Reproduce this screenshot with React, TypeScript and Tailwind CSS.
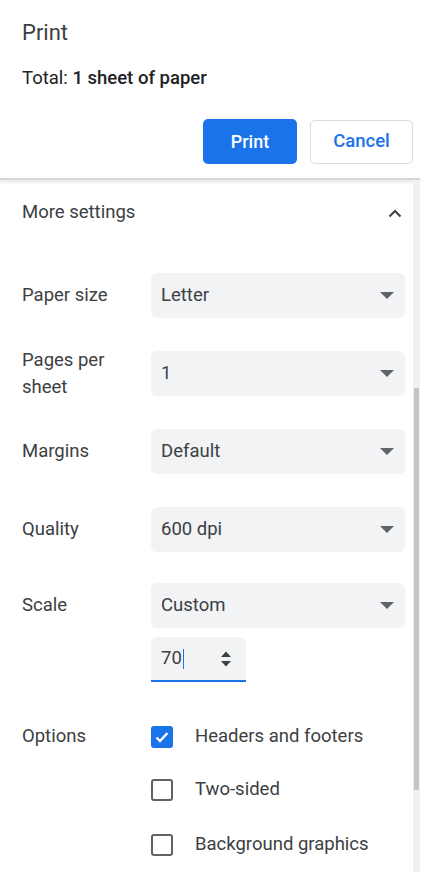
import React from "react";

function Caret() {
  return (
    <svg width="14" height="7" viewBox="0 0 14 7" className="shrink-0">
      <path d="M0 0h14L7 7z" fill="#5f6368" />
    </svg>
  );
}

function Select({ value }: { value: string }) {
  return (
    <div className="flex-1 h-[45px] rounded-[6px] bg-[#f1f3f4] flex items-center justify-between pl-[10px] pr-[11px] text-[18.5px] text-[#3c4043]">
      <span>{value}</span>
      <Caret />
    </div>
  );
}

function Row({ label, value, className }: { label: React.ReactNode; value: string; className?: string }) {
  return (
    <div className={"flex items-center h-[45px] " + (className ?? "")}>
      <div className="w-[129px] shrink-0 text-[18.5px] leading-[27px] text-[#3c4043]">{label}</div>
      <Select value={value} />
    </div>
  );
}

function Checkbox({ checked, label, className }: { checked?: boolean; label: string; className?: string }) {
  return (
    <div className={"flex items-center h-[27px] " + (className ?? "")}>
      {checked ? (
        <div className="w-[22px] h-[22px] rounded-[3px] bg-[#1a73e8] flex items-center justify-center">
          <svg width="16" height="16" viewBox="0 0 16 16">
            <path d="M2.5 8.5l3.5 3.5 7.5-8" fill="none" stroke="#fff" strokeWidth="2.4" />
          </svg>
        </div>
      ) : (
        <div className="w-[22px] h-[22px] rounded-[3px] border-2 border-[#5f6368]" />
      )}
      <span className="ml-[22px] text-[18.5px] text-[#3c4043]">{label}</span>
    </div>
  );
}

export default function App() {
  return (
    <div className="w-[434px] h-[882px] bg-white overflow-hidden" style={{ fontFamily: "Roboto, 'Liberation Sans', sans-serif" }}>
      <div className="w-[420px]">
        <div className="px-[22px] pt-[19px]">
          <div className="text-[22px] leading-[28px] text-[#3c4043]">Print</div>
          <div className="mt-[18px] text-[18.5px] leading-[26px] text-[#202124]">
            Total: <span className="font-medium">1 sheet of paper</span>
          </div>
        </div>
        <div className="flex items-center justify-end gap-[13px] pr-[7px] mt-[28px]">
          <button className="w-[94px] h-[45px] rounded-[5px] bg-[#1a73e8] text-white text-[18px] font-medium">Print</button>
          <button className="w-[103px] h-[44px] rounded-[5px] border border-[#dadce0] text-[#1a73e8] text-[18.5px] font-medium">Cancel</button>
        </div>
        <div className="mt-[14px] h-[2px] bg-[#d6d6d6] shadow-[0_2px_3px_rgba(0,0,0,0.15)]" />
        <div className="flex h-[692px]">
          <div className="flex-1 pl-[22px] pr-[8px]">
            <div className="flex items-center justify-between h-[66px] pr-[3px]">
              <span className="text-[18.5px] text-[#3c4043]">More settings</span>
              <svg width="14" height="9" viewBox="0 0 14 9">
                <path d="M1.5 7.5L7 2l5.5 5.5" fill="none" stroke="#3c4043" strokeWidth="2" />
              </svg>
            </div>
            <Row className="mt-[27px]" label="Paper size" value="Letter" />
            <Row className="mt-[33px]" label={<>Pages per<br />sheet</>} value="1" />
            <Row className="mt-[33px]" label="Margins" value="Default" />
            <Row className="mt-[33px]" label="Quality" value="600 dpi" />
            <Row className="mt-[31px]" label="Scale" value="Custom" />
            <div className="flex mt-[9px]">
              <div className="w-[129px] shrink-0" />
              <div className="w-[95px] h-[45px] rounded-t-[6px] bg-[#f1f3f4] border-b-2 border-[#1a73e8] flex items-center justify-between pl-[10px] pr-[14px] text-[18.5px] text-[#3c4043]">
                <span className="flex items-center">
                  70<span className="w-[1px] h-[20px] bg-[#1a73e8] ml-[1px]" />
                </span>
                <svg width="12" height="20" viewBox="0 0 12 20">
                  <path d="M1 8L6 2.5 11 8z M1 12l5 5.5 5-5.5z" fill="#3c4043" />
                </svg>
              </div>
            </div>
            <div className="flex mt-[41px]">
              <div className="w-[129px] shrink-0 text-[18.5px] leading-[27px] text-[#3c4043]">Options</div>
              <div className="flex flex-col">
                <Checkbox checked label="Headers and footers" />
                <Checkbox className="mt-[26px]" label="Two-sided" />
                <Checkbox className="mt-[28px]" label="Background graphics" />
              </div>
            </div>
          </div>
          <div className="w-[7px] bg-[#f1f1f1] flex flex-col">
            <div className="h-[208px]" />
            <div className="h-[402px] w-[5px] mx-auto bg-[#c4c4c4]" />
          </div>
        </div>
      </div>
    </div>
  );
}
